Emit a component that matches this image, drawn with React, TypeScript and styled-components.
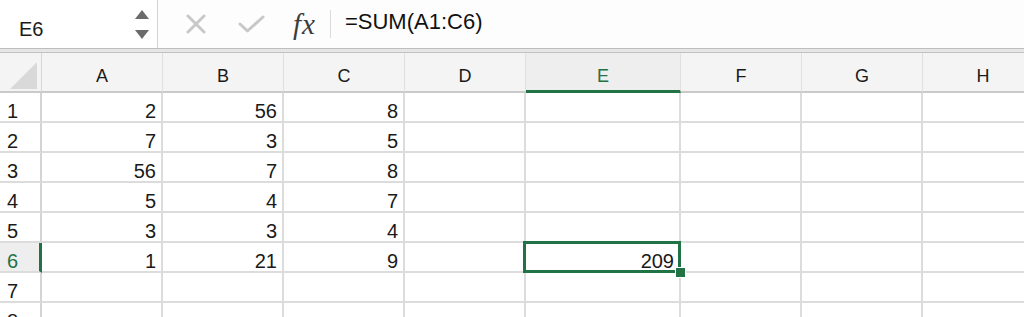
import React from "react";
import styled, { createGlobalStyle } from "styled-components";

const GREEN = "#217346";

const GlobalStyle = createGlobalStyle`
  body {
    margin: 0;
    background: #fff;
    font-family: "Liberation Sans", Arial, sans-serif;
  }
`;

const Window = styled.div`
  width: 1024px;
  height: 317px;
  overflow: hidden;
  background: #fff;
`;

const FormulaBar = styled.div`
  display: flex;
  align-items: center;
  height: 48px;
  background: #fdfdfd;
  border-bottom: 1px solid #bdbdbd;
`;

const NameBox = styled.div`
  box-sizing: border-box;
  width: 158px;
  height: 48px;
  display: flex;
  align-items: center;
  justify-content: space-between;
  padding: 0 8px 0 19px;
  background: #fff;
  border-right: 1px solid #d2d2d2;
`;

const NameText = styled.span`
  font-size: 20px;
  line-height: 22px;
  color: #1a1a1a;
  margin-top: 10px;
`;

const Spinner = styled.div`
  display: flex;
  flex-direction: column;
  gap: 11px;
`;

const IconSlot = styled.div<{ $ml: number }>`
  display: flex;
  align-items: center;
  margin-left: ${(p) => p.$ml}px;
`;

const Fx = styled.span`
  font-family: "Liberation Serif", "Times New Roman", serif;
  font-style: italic;
  font-size: 29px;
  letter-spacing: 1px;
  color: #3c3c3c;
  margin-left: 28px;
  margin-top: 1px;
`;

const Separator = styled.div`
  width: 1px;
  height: 28px;
  background: #dcdcdc;
  margin-left: 14px;
`;

const FormulaText = styled.span`
  font-size: 22px;
  line-height: 26px;
  color: #111;
  margin-left: 14px;
  margin-bottom: 4px;
`;

const Band = styled.div`
  height: 3px;
  background: #e6e6e6;
  border-bottom: 1px solid #c2c2c2;
`;

const Grid = styled.div`
  display: grid;
  grid-template-columns: 42px 121px 121px 121px 121px 155px 121px 121px 121px;
  grid-template-rows: 40px repeat(8, 30px);
  width: 1044px;
`;

const Corner = styled.div`
  box-sizing: border-box;
  background: #f4f4f4;
  border-right: 1px solid #d6d6d6;
  border-bottom: 2px solid #cacaca;
  display: flex;
  align-items: flex-end;
  justify-content: flex-end;
  padding: 0 4px 2px 0;
`;

const ColHeader = styled.div<{ $active?: boolean }>`
  box-sizing: border-box;
  background: ${(p) => (p.$active ? "#eeeeee" : "#f4f4f4")};
  border-right: 1px solid #e0e0e0;
  border-bottom: ${(p) => (p.$active ? `3px solid ${GREEN}` : "2px solid #cacaca")};
  text-align: center;
  font-size: 18px;
  line-height: 20px;
  padding-top: 13px;
  color: ${(p) => (p.$active ? GREEN : "#1a1a1a")};
`;

const RowHeader = styled.div<{ $active?: boolean }>`
  box-sizing: border-box;
  background: ${(p) => (p.$active ? "#eeeeee" : "#fff")};
  border-right: ${(p) => (p.$active ? `3px solid ${GREEN}` : "2px solid #d4d4d4")};
  border-bottom: 2px solid #dcdcdc;
  font-size: 20px;
  line-height: 22px;
  padding: 7px 0 0 7px;
  color: ${(p) => (p.$active ? GREEN : "#1a1a1a")};
`;

const Cell = styled.div`
  position: relative;
  box-sizing: border-box;
  border-right: 2px solid #dcdcdc;
  border-bottom: 2px solid #dcdcdc;
  text-align: right;
  font-size: 20px;
  line-height: 22px;
  padding: 7px 5px 0 0;
  color: #1a1a1a;
`;

const Selection = styled.div`
  position: absolute;
  z-index: 2;
  left: -3px;
  top: -2px;
  right: -2px;
  bottom: -2px;
  border: 3px solid ${GREEN};
  pointer-events: none;
`;

const FillHandle = styled.div`
  position: absolute;
  right: -7px;
  bottom: -7px;
  width: 9px;
  height: 9px;
  background: ${GREEN};
  box-shadow: 0 0 0 1px #fff;
`;

const columns = ["A", "B", "C", "D", "E", "F", "G", "H"];

const values: (number | null)[][] = [
  [2, 56, 8],
  [7, 3, 5],
  [56, 7, 8],
  [5, 4, 7],
  [3, 3, 4],
  [1, 21, 9],
  [],
  [],
];

export default function App() {
  return (
    <Window>
      <GlobalStyle />
      <FormulaBar>
        <NameBox>
          <NameText>E6</NameText>
          <Spinner>
            <svg width="14" height="9" viewBox="0 0 14 9">
              <polygon points="7,0 14,9 0,9" fill="#6b6b6b" />
            </svg>
            <svg width="14" height="9" viewBox="0 0 14 9">
              <polygon points="0,0 14,0 7,9" fill="#6b6b6b" />
            </svg>
          </Spinner>
        </NameBox>
        <IconSlot $ml={28}>
          <svg width="20" height="20" viewBox="0 0 20 20">
            <path d="M2 2 L18 18 M18 2 L2 18" stroke="#c8c8c8" strokeWidth="3" strokeLinecap="round" />
          </svg>
        </IconSlot>
        <IconSlot $ml={32}>
          <svg width="27" height="18" viewBox="0 0 27 18">
            <path d="M2 9 L9.5 16 L25 2" stroke="#c8c8c8" strokeWidth="3" fill="none" strokeLinecap="round" strokeLinejoin="round" />
          </svg>
        </IconSlot>
        <Fx>fx</Fx>
        <Separator />
        <FormulaText>=SUM(A1:C6)</FormulaText>
      </FormulaBar>
      <Band />
      <Grid>
        <Corner>
          <svg width="27" height="27" viewBox="0 0 27 27">
            <polygon points="27,0 27,27 0,27" fill="#d9d9d9" />
          </svg>
        </Corner>
        {columns.map((c) => (
          <ColHeader key={c} $active={c === "E"}>
            {c}
          </ColHeader>
        ))}
        {values.map((row, r) => (
          <React.Fragment key={r}>
            <RowHeader $active={r === 5}>{r + 1}</RowHeader>
            {columns.map((c, ci) => {
              const isSel = r === 5 && c === "E";
              return (
                <Cell key={c}>
                  {isSel ? 209 : row[ci] ?? ""}
                  {isSel && (
                    <Selection>
                      <FillHandle />
                    </Selection>
                  )}
                </Cell>
              );
            })}
          </React.Fragment>
        ))}
      </Grid>
    </Window>
  );
}
